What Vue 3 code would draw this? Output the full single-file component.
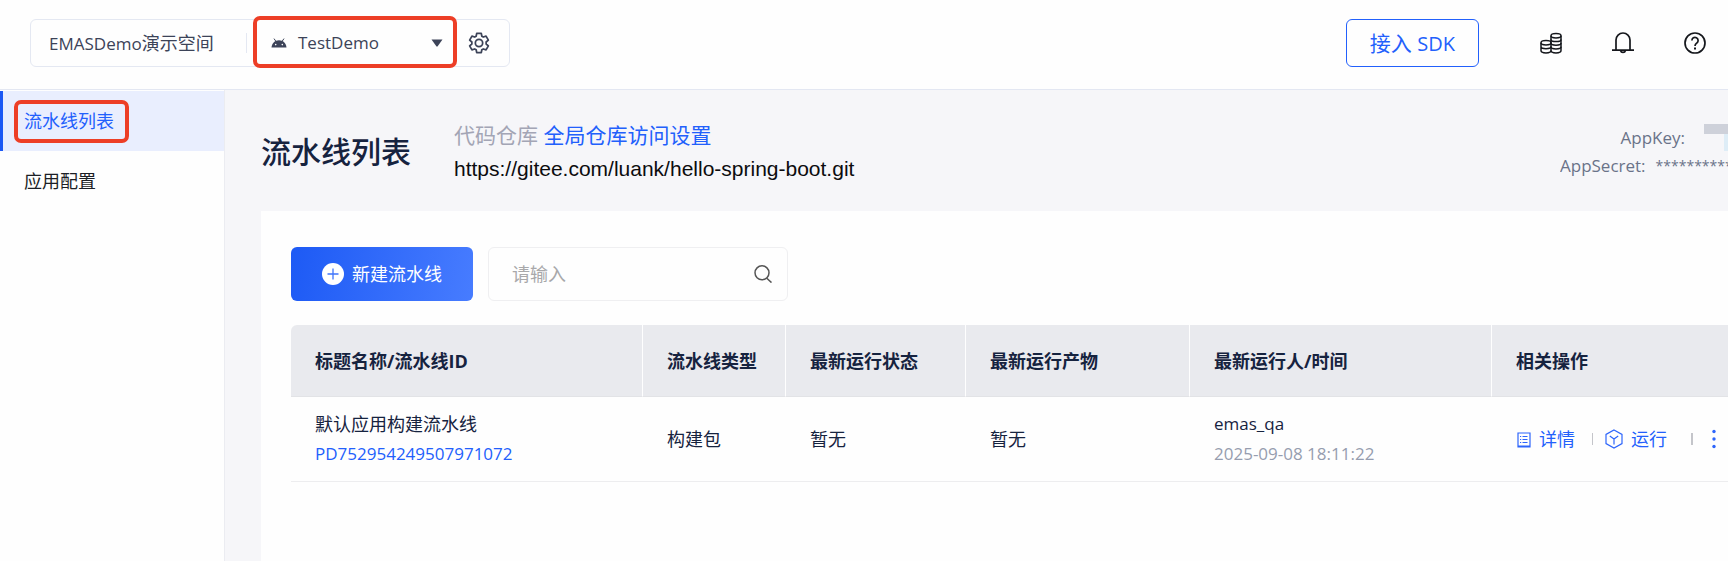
<script setup>
import { ref } from 'vue'

const keyword = ref('')
const columns = [
  { label: '标题名称/流水线ID', cls: 'c-name' },
  { label: '流水线类型', cls: 'c-type' },
  { label: '最新运行状态', cls: 'c-status' },
  { label: '最新运行产物', cls: 'c-artifact' },
  { label: '最新运行人/时间', cls: 'c-user' },
  { label: '相关操作', cls: 'c-ops' },
]
const rows = [
  {
    name: '默认应用构建流水线',
    id: 'PD752954249507971072',
    type: '构建包',
    status: '暂无',
    artifact: '暂无',
    user: 'emas_qa',
    time: '2025-09-08 18:11:22',
  },
]
</script>

<template>
  <div class="page">
    <header class="topbar">
      <div class="switcher">
        <button type="button" class="space"><span class="latin">EMASDemo</span>演示空间</button>
        <span class="split"></span>
        <button type="button" class="app marked">
          <svg class="android" viewBox="0 0 16 10" aria-hidden="true">
            <path d="M3 .6 4.800 3.200M13 .6 11.200 3.200" stroke="#3c4358" stroke-width="1" fill="none" />
            <path d="M.5 9.500C.9 5 4 2.200 8 2.200S15.100 5 15.500 9.500Z" fill="#3c4358" />
            <circle cx="4.700" cy="6.600" r=".8" fill="#fff" />
            <circle cx="11.300" cy="6.600" r=".8" fill="#fff" />
          </svg>
          <span class="latin app-name">TestDemo</span>
          <svg class="caret" viewBox="0 0 12 8" aria-hidden="true"><path d="M.5 .5h11L6.500 7.500h-1Z" fill="#3c4358" /></svg>
        </button>
        <button type="button" class="gear" aria-label="设置">
          <svg viewBox="0 0 24 24" fill="none" stroke="#3c4358" stroke-width="1.900" stroke-linejoin="round">
            <path d="M9.500 1.500h5l.6 3.100 1.600.9 3-1 2.500 4.300-2.400 2.100v2.200l2.400 2.100-2.500 4.300-3-1-1.600.9-.6 3.100h-5l-.6-3.100-1.600-.9-3 1-2.500-4.300 2.400-2.100v-2.200L1.800 8.800l2.500-4.300 3 1 1.600-.9Z" />
            <circle cx="12" cy="12" r="4" />
          </svg>
        </button>
      </div>
      <div class="tools">
        <button type="button" class="sdk">接入 <span class="sdk-latin">SDK</span></button>
        <button type="button" class="tool" aria-label="费用">
          <svg viewBox="0 0 22 22" fill="none" stroke="#15171c" stroke-width="1.500">
            <ellipse cx="16" cy="3.700" rx="5" ry="2.200" />
            <path d="M11 3.700v14.800c0 1.300 2.200 2.400 5 2.400s5-1.100 5-2.400V3.700" />
            <path d="M11 7.400c0 1.300 2.200 2.200 5 2.200s5-.9 5-2.200M11 11.100c0 1.300 2.200 2.200 5 2.200s5-.9 5-2.200M11 14.800c0 1.300 2.200 2.200 5 2.200s5-.9 5-2.200" />
            <ellipse cx="6" cy="10.700" rx="5" ry="2.200" />
            <path d="M1 10.700v7.800c0 1.300 2.200 2.400 5 2.400s5-1.100 5-2.400M1 14.600c0 1.300 2.200 2.200 5 2.200s5-.9 5-2.200" />
          </svg>
        </button>
        <button type="button" class="tool" aria-label="消息">
          <svg viewBox="0 0 22 22" fill="none" stroke="#15171c" stroke-width="1.700">
            <path d="M0 18.200h22M4 18.200V8a7 7 0 0 1 14 0v10.200" />
            <path d="M8.500 18.500a2.600 2.600 0 0 0 5 0" />
          </svg>
        </button>
        <button type="button" class="tool" aria-label="帮助">
          <svg viewBox="0 0 22 22" fill="none" stroke="#15171c" stroke-width="1.700">
            <circle cx="11" cy="11" r="10" />
            <path d="M7.900 8.500a3.100 3.100 0 1 1 4.900 2.500c-1.200.8-1.800 1.300-1.800 2.900" />
            <path d="M11 15.500v2" stroke-width="2" />
          </svg>
        </button>
      </div>
    </header>

    <div class="body">
      <nav class="side">
        <a href="#list" class="nav-item active"><span class="nav-text marked">流水线列表</span></a>
        <a href="#config" class="nav-item"><span class="nav-text">应用配置</span></a>
      </nav>

      <main class="content">
        <div class="page-head">
          <h1>流水线列表</h1>
          <div class="repo">
            <p><span class="muted">代码仓库</span> <a href="#repo">全局仓库访问设置</a></p>
            <p class="url">https://gitee.com/luank/hello-spring-boot.git</p>
          </div>
          <dl class="keys">
            <div><dt>AppKey:</dt><dd class="mask"><i></i></dd></div>
            <div class="secret"><dt>AppSecret:</dt><dd class="stars">**********</dd></div>
          </dl>
        </div>

        <section class="card">
          <div class="bar">
            <button type="button" class="create">
              <svg viewBox="0 0 22 22" aria-hidden="true">
                <circle cx="11" cy="11" r="11" fill="#fff" />
                <path d="M11 5.500v11M5.500 11h11" stroke="#3f74fb" stroke-width="1.300" />
              </svg>
              新建流水线
            </button>
            <div class="search">
              <input v-model="keyword" type="text" aria-label="搜索流水线" placeholder="请输入" />
              <button type="button" aria-label="搜索">
                <svg viewBox="0 0 18 18" fill="none" stroke="#555" stroke-width="1.500">
                  <circle cx="8" cy="7.800" r="7" />
                  <path d="m12.500 13 5 4.600" />
                </svg>
              </button>
            </div>
          </div>

          <table>
            <colgroup><col v-for="c in columns" :key="c.cls" :class="c.cls" /></colgroup>
            <thead>
              <tr><th v-for="c in columns" :key="c.cls" scope="col">{{ c.label }}</th></tr>
            </thead>
            <tbody>
              <tr v-for="r in rows" :key="r.id">
                <td>
                  <div>{{ r.name }}</div>
                  <div class="latin"><a href="#pipeline">{{ r.id }}</a></div>
                </td>
                <td>{{ r.type }}</td>
                <td>{{ r.status }}</td>
                <td>{{ r.artifact }}</td>
                <td>
                  <div class="latin">{{ r.user }}</div>
                  <div class="latin time">{{ r.time }}</div>
                </td>
                <td>
                  <div class="ops">
                    <a href="#detail">
                      <svg class="doc" viewBox="0 0 14 18" fill="none" stroke="#2d65fb" stroke-width="1.200">
                        <path d="M1 3h12v14H1ZM5.500 6.500h5M5.500 9.500h5M5.500 12.500h5M3 6.500h1.200M3 9.500h1.200M3 12.500h1.200M1 16h12" />
                      </svg>详情</a>
                    <span class="sep"></span>
                    <a href="#run">
                      <svg class="hex" viewBox="0 0 18 20" fill="none" stroke="#2d65fb" stroke-width="1.200">
                        <path d="M9 .9 17 5.400v9.200L9 19.100 1 14.600V5.400ZM4.800 7 9 10l4.200-3M9 10v5.500" />
                      </svg>运行</a>
                    <span class="sep wide"></span>
                    <button type="button" class="more" aria-label="更多">
                      <svg viewBox="0 0 4 20" fill="#2d65fb">
                        <circle cx="2" cy="2.500" r="1.700" /><circle cx="2" cy="10" r="1.700" /><circle cx="2" cy="17.500" r="1.700" />
                      </svg>
                    </button>
                  </div>
                </td>
              </tr>
            </tbody>
          </table>
        </section>
      </main>
    </div>
  </div>
</template>

<style>
body {
  overflow-x: hidden;
}
</style>

<style scoped>
.page {
  display: flex;
  flex-direction: column;
  min-height: 100vh;
  background: #fefefe;
  color: #16233f;
  font: 18px/30px "Open Sans", "Noto Sans CJK SC", sans-serif;
}
.page * {
  box-sizing: border-box;
}
button,
input {
  margin: 0;
  padding: 0;
  border: 0;
  background: none;
  color: inherit;
  font: inherit;
}
svg {
  display: block;
  flex: none;
}
a {
  color: #2260fc;
  text-decoration: none;
}
p,
h1,
dl,
dd {
  margin: 0;
}
.latin {
  font-size: 17px;
}

.topbar {
  display: flex;
  justify-content: space-between;
  align-items: flex-start;
  padding: 19px 22px 22px 30px;
  border-bottom: 1px solid #e3e7f2;
}
.switcher {
  display: flex;
  align-items: center;
  height: 48px;
  padding: 0 19px 0 18px;
  border: 1px solid #e4e8f2;
  border-radius: 6px;
  color: #3c4358;
}
.space {
  width: 197px;
  text-align: left;
}
.split {
  width: 1px;
  height: 20px;
  background: #e4e8f2;
}
.marked {
  position: relative;
}
.marked::after {
  content: "";
  position: absolute;
  border: 4px solid #ed3e26;
  border-radius: 7px;
}
.app {
  display: flex;
  align-items: center;
  width: 221px;
  height: 46px;
  padding: 0 25px 0 24px;
}
.app::after {
  inset: -4px 11px -2px 6px;
}
.android {
  width: 16px;
  height: 10px;
}
.app-name {
  flex: 1;
  padding-left: 11px;
  text-align: left;
}
.caret {
  width: 12px;
  height: 8px;
}
.gear svg {
  width: 22px;
  height: 22px;
}
.tools {
  display: flex;
  align-items: center;
  gap: 50px;
}
.sdk {
  height: 48px;
  margin-right: 11px;
  padding: 0 23px;
  border: 1px solid #2260fc;
  border-radius: 6px;
  color: #2260fc;
  font-size: 21px;
}
.sdk-latin {
  font-size: 20px;
}
.tool {
  width: 22px;
  height: 24px;
}
.tool svg {
  width: 22px;
  height: 22px;
}

.body {
  display: flex;
  flex: 1;
}
.side {
  flex: none;
  width: 225px;
  padding-top: 1px;
  border-right: 1px solid #ebecf1;
}
.nav-item {
  display: flex;
  align-items: center;
  height: 60px;
  padding-left: 24px;
  color: #1c1f26;
}
.nav-item.active {
  padding-left: 21px;
  border-left: 3px solid #1b58f4;
  background: #e9eefe;
  color: #2260fc;
}
.nav-text::after {
  inset: -6px -15px -7px -10px;
}
.content {
  display: flex;
  flex: 1;
  flex-direction: column;
  min-width: 0;
  padding-left: 36px;
  background: #f6f6f9;
}
.page-head {
  display: flex;
  align-items: center;
  height: 121px;
  padding-top: 3px;
}
h1 {
  width: 193px;
  font-size: 30px;
  font-weight: 500;
  line-height: 44px;
}
.repo {
  flex: 1;
  font-size: 21px;
  line-height: 34px;
}
.muted {
  color: #a3a5b5;
}
.url {
  color: #0c0c0e;
  font-family: "Liberation Sans", Arial, sans-serif;
}
.keys {
  width: 168px;
  overflow: hidden;
  color: #6a7389;
  font-size: 17px;
  line-height: 28px;
}
.keys div {
  display: flex;
  justify-content: flex-end;
}
.keys .secret {
  justify-content: flex-start;
  gap: 10px;
}
.stars {
  font-size: 14px;
}
.mask {
  width: 24px;
  height: 27px;
  margin-left: 19px;
  border-top: 10px solid #ced1da;
}
.mask i {
  display: block;
  width: 4px;
  height: 17px;
  margin-left: auto;
  background: #deedf7;
}

.card {
  flex: 1;
  padding: 36px 0 0 30px;
  background: #fefefe;
}
.bar {
  display: flex;
  gap: 15px;
  margin-bottom: 24px;
}
.create {
  display: flex;
  align-items: center;
  justify-content: center;
  gap: 8px;
  width: 182px;
  height: 54px;
  border-radius: 6px;
  background: linear-gradient(100deg, #1d5af5, #477cff);
  color: #fff;
}
.create svg {
  width: 22px;
  height: 22px;
}
.search {
  display: flex;
  align-items: center;
  width: 300px;
  height: 54px;
  padding: 0 15px 0 23px;
  border: 1px solid #efeff1;
  border-radius: 6px;
}
.search input {
  flex: 1;
  min-width: 0;
  height: 50px;
  outline: 0;
}
.search input::placeholder {
  color: #a8a8aa;
}
.search svg {
  width: 18px;
  height: 18px;
}

table {
  width: 100%;
  border-collapse: separate;
  border-spacing: 0;
  table-layout: fixed;
}
.c-name {
  width: 352px;
}
.c-type {
  width: 143px;
}
.c-status {
  width: 180px;
}
.c-artifact {
  width: 224px;
}
.c-user {
  width: 302px;
}
th {
  height: 72px;
  padding: 0 0 0 24px;
  border-right: 1px solid #fefefe;
  border-bottom: 1px solid #e2e3e6;
  background: #e9eaee;
  font-weight: 700;
  text-align: left;
}
th:first-child {
  border-top-left-radius: 6px;
}
th:last-child {
  border-right: 0;
}
td {
  padding: 12px 0 12px 24px;
  border-bottom: 1px solid #ededef;
}
.time {
  color: #969daf;
}
.ops {
  display: flex;
  align-items: center;
}
.ops a {
  display: flex;
  align-items: center;
  gap: 8px;
}
.doc {
  width: 14px;
  height: 18px;
  margin-left: 1px;
}
.hex {
  width: 18px;
  height: 20px;
}
.sep {
  width: 1px;
  height: 12px;
  margin: 0 12px 0 17px;
  background: #c4c5ca;
}
.sep.wide {
  width: 2px;
  margin: 0 19px 0 24px;
}
.more svg {
  width: 4px;
  height: 20px;
}
</style>
